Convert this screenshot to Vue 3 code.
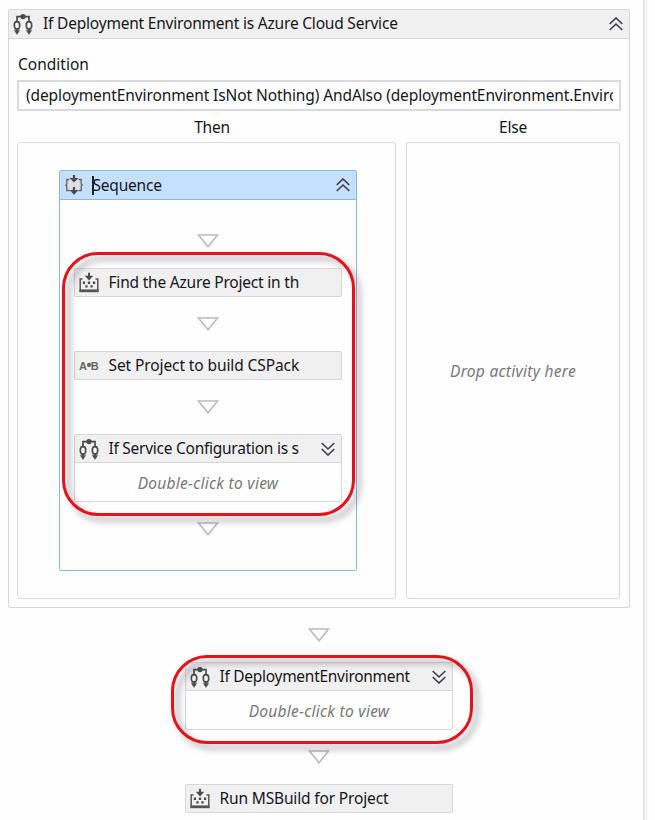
<script setup>
import { h } from 'vue'

const paths = {
  branch: [
    h('path', { d: 'M10 2.6H4V8M10 2.6H16V8M4 14.5v4M16 14.5v4', fill: 'none', stroke: '#4b4b4b', 'stroke-width': 1.7 }),
    h('circle', { cx: 10, cy: 2.6, r: 2.7, fill: '#4b4b4b' }),
    h('path', { d: 'M2.4 7.8h3.2l1 2v3l-1 2H2.4l-1-2v-3ZM14.4 7.8h3.2l1 2v3l-1 2h-3.2l-1-2v-3Z', fill: '#f6f6f6', stroke: '#4b4b4b', 'stroke-width': 1.7 }),
    h('path', { d: 'M1.4 16.4h5.2L4 20.4ZM13.4 16.4h5.2L16 20.4Z', fill: '#4b4b4b', stroke: '#4b4b4b', 'stroke-width': .5 }),
  ],
  sequence: [
    h('path', { d: 'M5.5 4.5H2.8V9L1.8 10l1 1v4.5h3M14.5 4.5h2.7V9l1 1-1 1v4.5h-3', fill: '#dcdfe4', stroke: '#646a72', 'stroke-width': 1.4 }),
    h('path', { d: 'M5 5h10v10H5Z', fill: '#dcdfe4' }),
    h('path', { d: 'M10 0v4M10 12v5', stroke: '#4b4b4b', 'stroke-width': 2.2 }),
    h('path', { d: 'M5.6 3h8.8L10 7.5ZM5.6 15h8.8L10 19.8Z', fill: '#4b4b4b' }),
  ],
  build: [
    h('path', { d: 'M3.5 6H1.2v12.2h17.6V6h-2.3', fill: 'none', stroke: '#555', 'stroke-width': 1.5 }),
    h('path', { d: 'M.5 16.4h19v2.8H.5Z', fill: '#555' }),
    h('path', { d: 'M10 -.3v4', stroke: '#4b4b4b', 'stroke-width': 2 }),
    h('path', { d: 'M5.8 2.8h8.4L10 7.5Z', fill: '#4b4b4b' }),
    h('path', { d: 'M3.8 8.6h2.3v2.3H3.8zM8.85 8.6h2.3v2.3h-2.3zM13.9 8.6h2.3v2.3h-2.3zM6.3 12.2h2.3v2.3H6.3zM11.4 12.2h2.3v2.3h-2.3z', fill: '#4b4b4b' }),
  ],
}
const Icon = (props) => h('svg', { width: 20, height: 20, viewBox: '0 0 20 20', overflow: 'visible' }, paths[props.name])
Icon.props = ['name']

const Chevron = (props) => h('svg', { width: 14, height: 14, viewBox: '0 0 14 14' }, [
  h('path', {
    d: props.up ? 'M.7 7 7 1l6.3 6M.7 13 7 7l6.3 6' : 'M.7 1 7 7l6.3-6M.7 7 7 13l6.3-6',
    fill: 'none', stroke: '#3c3c44', 'stroke-width': 1.6,
  }),
])
Chevron.props = { up: Boolean }

const Arrow = () => h('svg', { width: 22, height: 14, viewBox: '0 0 22 14' }, [
  h('path', { d: 'M1.5 1h19L11 12.8Z', fill: '#fff', stroke: '#bbbcc4', 'stroke-width': 1.6 }),
])
</script>

<template>
  <main class="canvas">
    <section class="card outer">
      <header class="head outer-head">
        <Icon name="branch" />
        <span class="title t-outer">If Deployment Environment is Azure Cloud Service</span>
        <Chevron up class="chev" />
      </header>
      <div class="outer-body">
        <div class="label">Condition</div>
        <div class="input"><span>(deploymentEnvironment IsNot Nothing) AndAlso (deploymentEnvironment.Enviro</span></div>
        <div class="branches">
          <div class="branch-name">Then</div>
          <div class="branch-name">Else</div>
          <div class="box then">
            <section class="card seq">
              <header class="head seq-head">
                <Icon name="sequence" />
                <span class="title t-seq"><i class="caret"></i>Sequence</span>
                <Chevron up class="chev" />
              </header>
              <div class="flow">
                <Arrow />
                <div class="card item">
                  <div class="head"><Icon name="build" /><span class="title t-find">Find the Azure Project in th</span></div>
                </div>
                <Arrow />
                <div class="card item">
                  <div class="head"><b class="assign">A<i>•</i>B</b><span class="title t-set">Set Project to build CSPack</span></div>
                </div>
                <Arrow />
                <div class="card item">
                  <div class="head"><Icon name="branch" /><span class="title t-conf">If Service Configuration is s</span><Chevron class="chev" /></div>
                  <div class="view">Double-click to view</div>
                </div>
                <Arrow />
              </div>
              <div class="ring ring-a"></div>
            </section>
          </div>
          <div class="box else"><span class="drop">Drop activity here</span></div>
        </div>
      </div>
    </section>
    <div class="tail">
      <Arrow />
      <div class="card item">
        <div class="head"><Icon name="branch" /><span class="title t-dep">If DeploymentEnvironment</span><Chevron class="chev" /></div>
        <div class="view">Double-click to view</div>
        <div class="ring ring-b"></div>
      </div>
      <Arrow />
      <div class="card item">
        <div class="head"><Icon name="build" /><span class="title t-run">Run MSBuild for Project</span></div>
      </div>
    </div>
  </main>
</template>

<style>
body { background: #fefefe; }
</style>

<style scoped>
* { box-sizing: border-box; }
.canvas {
  width: 647px; height: 820px; padding: 9px 0 0 8px; overflow: hidden;
  border-right: 1px solid #ededf0; background: linear-gradient(#dadae0, #dadae0) 643px 0 / 1.5px 100% no-repeat, #fefefe;
  font: 16px/22px "Noto Sans", "Open Sans", sans-serif; color: #16161c;
}
svg { display: block; flex: none; }
.card { position: relative; border: 1px solid #d6d6dc; border-radius: 2px; background: #fefefe; }
.outer { width: 622px; height: 599px; }
.head { display: flex; align-items: center; height: 27px; padding: 0 6px 0 4px; background: #f0f0f0; }
.title { margin-left: 10px; white-space: nowrap; font-size: 15.5px; transform: translateY(-1px); }
.chev { margin-left: auto; }
.outer-head { height: 29px; border-bottom: 1px solid #d6d6dc; }
.t-outer { letter-spacing: -.2px; }
.outer-body { padding: 14px 8px 0; }
.label { height: 26px; font-size: 15.5px; padding-left: 1px; }
.input { height: 31px; border: 2px solid #d9d9e2; padding: 2px 6px 2px 7px; margin-top: 1px; }
.input span { display: block; overflow: hidden; white-space: nowrap; font-size: 15.5px; letter-spacing: -.1px; }
.branches { display: grid; grid-template-columns: 379px 214px; column-gap: 10px; grid-template-rows: 31px 457px; }
.branch-name { padding: 5px 0 0 11px; text-align: center; font-size: 15.5px; letter-spacing: -.2px; }
.branch-name + .branch-name { padding-left: 0; }
.box { border: 1px solid #d8d8de; border-radius: 3px; }
.then { padding: 27px 0 0 41px; }
.else { display: flex; align-items: center; justify-content: center; }
.drop, .view { font-style: italic; color: #77777a; font-size: 15.5px; letter-spacing: .28px; }
.seq { width: 298px; height: 401px; border-color: #8db9e6; }
.seq-head { height: 29px; background: #c5e0fd; border-bottom: 1px solid #8db9e6; }
.t-seq { display: flex; align-items: center; margin-left: 8px; letter-spacing: -.2px; transform: none; }
.caret { width: 1.5px; height: 19px; background: #222; margin-right: -1px; }
.flow { display: flex; flex-direction: column; align-items: center; padding-top: 34px; }
.item { width: 268px; margin: 20px 0; }
.item .title { margin-left: 9.5px; transform: translateY(-1.5px); }
.t-find { letter-spacing: -.2px; }
.t-set { letter-spacing: -.1px; }
.t-conf { letter-spacing: -.26px; }
.t-dep { letter-spacing: -.28px; }
.t-run { letter-spacing: -.15px; }
.view { border-top: 1px solid #d6d6dc; height: 39px; line-height: 41px; text-align: center; }
.ring { position: absolute; z-index: 2; border: 3px solid #e3131b; border-radius: 36px; filter: drop-shadow(5px 5px 3px rgba(50, 40, 50, .45)); pointer-events: none; }
.ring-a { left: 2px; top: 81px; width: 293px; height: 264px; }
.ring-b { left: -15px; top: -8px; width: 302px; height: 89px; }
.tail { display: flex; flex-direction: column; align-items: center; width: 622px; padding-top: 20px; }
.assign { width: 20px; font: bold 11px/20px "Liberation Sans", sans-serif; color: #666; letter-spacing: -.5px; white-space: nowrap; }
.assign i { font-size: 14px; line-height: 10px; font-style: normal; }
</style>
